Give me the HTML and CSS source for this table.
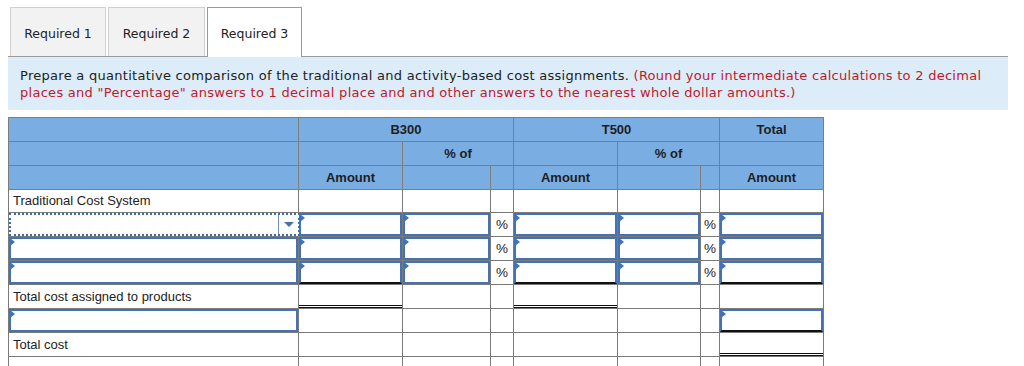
FILE: index.html
```html
<!DOCTYPE html>
<html>
<head>
<meta charset="utf-8">
<link rel="stylesheet" href="styles.css">
</head>
<body>
<div class="page">
  <div class="tabs">
    <div class="tab t1">Required 1</div>
    <div class="tab t2">Required 2</div>
    <div class="tab active">Required 3</div>
  </div>
  <div class="instr">
    Prepare a quantitative comparison of the traditional and activity-based cost assignments. <span class="red">(Round your intermediate calculations to 2 decimal places and "Percentage" answers to 1 decimal place and and other answers to the nearest whole dollar amounts.)</span>
  </div>
  <table class="grid">
    <colgroup>
      <col class="c1"><col class="c2"><col class="c3"><col class="c4"><col class="c5"><col class="c6"><col class="c7"><col class="c8">
    </colgroup>
    <thead>
      <tr>
        <th></th>
        <th colspan="3">B300</th>
        <th colspan="3">T500</th>
        <th>Total</th>
      </tr>
      <tr>
        <th></th>
        <th></th>
        <th colspan="2">% of</th>
        <th></th>
        <th colspan="2">% of</th>
        <th></th>
      </tr>
      <tr>
        <th></th>
        <th>Amount</th>
        <th></th>
        <th></th>
        <th>Amount</th>
        <th></th>
        <th></th>
        <th>Amount</th>
      </tr>
    </thead>
    <tbody>
      <tr class="first">
        <td class="lbl">Traditional Cost System</td>
        <td></td><td></td><td></td><td></td><td></td><td></td><td></td>
      </tr>
      <tr>
        <td class="in"><div class="sel"><span class="arrow"></span></div></td>
        <td class="in"><div class="inp"></div></td>
        <td class="in"><div class="inp"></div></td>
        <td class="pct">%</td>
        <td class="in"><div class="inp"></div></td>
        <td class="in"><div class="inp"></div></td>
        <td class="pct">%</td>
        <td class="in"><div class="inp"></div></td>
      </tr>
      <tr>
        <td class="in"><div class="inp"></div></td>
        <td class="in"><div class="inp"></div></td>
        <td class="in"><div class="inp"></div></td>
        <td class="pct">%</td>
        <td class="in"><div class="inp"></div></td>
        <td class="in"><div class="inp"></div></td>
        <td class="pct">%</td>
        <td class="in"><div class="inp"></div></td>
      </tr>
      <tr>
        <td class="in"><div class="inp"></div></td>
        <td class="in"><div class="inp ul"></div></td>
        <td class="in"><div class="inp"></div></td>
        <td class="pct">%</td>
        <td class="in"><div class="inp ul"></div></td>
        <td class="in"><div class="inp"></div></td>
        <td class="pct">%</td>
        <td class="in"><div class="inp ul"></div></td>
      </tr>
      <tr>
        <td class="lbl">Total cost assigned to products</td>
        <td class="dbl"></td><td></td><td></td><td class="dbl"></td><td></td><td></td><td></td>
      </tr>
      <tr>
        <td class="in"><div class="inp"></div></td>
        <td></td><td></td><td></td><td></td><td></td><td></td>
        <td class="in"><div class="inp ul"></div></td>
      </tr>
      <tr>
        <td class="lbl">Total cost</td>
        <td></td><td></td><td></td><td></td><td></td><td></td>
        <td class="dbl"></td>
      </tr>
      <tr>
        <td class="lbl"></td>
        <td></td><td></td><td></td><td></td><td></td><td></td><td></td>
      </tr>
    </tbody>
  </table>
</div>
</body>
</html>
```

FILE: styles.css
```css
html, body {
  margin: 0;
  padding: 0;
  background: #ffffff;
}

.page {
  padding: 7px 16px 0 8px;
  width: 1000px;
}

.tabs {
  display: flex;
  gap: 2px;
  padding-left: 2px;
  border-bottom: 1px solid #9a9a9a;
  height: 49px;
}

.tab {
  box-sizing: border-box;
  height: 49px;
  border: 1px solid #cfcfcf;
  border-bottom: none;
  background: #f2f2f2;
  font-family: "DejaVu Sans", Verdana, sans-serif;
  font-size: 12.5px;
  color: #222;
  display: flex;
  align-items: center;
  justify-content: center;
  padding-top: 2px;
}

.t1 { width: 96px; }
.t2 { width: 97px; }

.tab.active {
  width: 95px;
  background: #ffffff;
  border-color: #9a9a9a;
  height: 50px;
  position: relative;
  z-index: 1;
}

.instr {
  background: #dcecf8;
  font-family: "DejaVu Sans", Verdana, sans-serif;
  font-size: 13px;
  letter-spacing: 0.28px;
  line-height: 17px;
  color: #222;
  padding: 10px 12px 9px 12px;
  height: 34px;
}

.red {
  color: #c2182c;
}

.grid {
  margin-top: 7px;
  border-collapse: collapse;
  table-layout: fixed;
  width: 815px;
  font-family: "Liberation Sans", Arial, sans-serif;
  font-size: 13px;
  color: #222;
}

.c1 { width: 290px; }
.c2 { width: 104px; }
.c3 { width: 88px; }
.c4 { width: 23px; }
.c5 { width: 104px; }
.c6 { width: 83px; }
.c7 { width: 19px; }
.c8 { width: 104px; }

.grid th {
  background: #7aade2;
  border: 1px solid #7d7d7d;
  height: 23px;
  padding: 0;
  font-weight: bold;
  text-align: center;
  vertical-align: middle;
  color: #1e1e1e;
}

.grid tbody tr {
  height: 24px;
}

.grid tbody tr.first {
  height: 23px;
}

.grid td {
  border: 1px solid #7a7a7a;
  padding: 0;
  vertical-align: middle;
  line-height: 15px;
}

.grid td.lbl {
  padding-left: 4px;
  padding-bottom: 1px;
}

.grid td.pct {
  text-align: center;
  font-size: 13.5px;
}

.grid td.in {
  padding: 0;
}

.inp {
  box-sizing: border-box;
  height: 23px;
  width: 100%;
  border: 2px solid #4472b3;
  background: #ffffff;
  position: relative;
}

.inp::before {
  content: "";
  position: absolute;
  left: -1px;
  top: -1px;
  width: 0;
  height: 0;
  border-top: 4px solid transparent;
  border-bottom: 4px solid transparent;
  border-left: 5px solid #3b73c0;
}

.inp.ul {
  border-bottom-color: #111;
}

.grid td.dbl {
  background:
    linear-gradient(#111, #111) left bottom 2px / 100% 1px no-repeat,
    linear-gradient(#111, #111) left bottom / 100% 1px no-repeat;
}

.sel {
  box-sizing: border-box;
  height: 23px;
  width: calc(100% + 2px);
  border: 2px dotted #3a6cb6;
  background: #ffffff;
  position: relative;
}

.sel .arrow {
  position: absolute;
  right: 0;
  top: 0;
  bottom: 0;
  width: 19px;
  border-left: 1px solid #6d8fc4;
}

.sel .arrow::after {
  content: "";
  position: absolute;
  left: 5px;
  top: 7px;
  width: 0;
  height: 0;
  border-left: 5px solid transparent;
  border-right: 5px solid transparent;
  border-top: 5px solid #4a6ea8;
}
```
